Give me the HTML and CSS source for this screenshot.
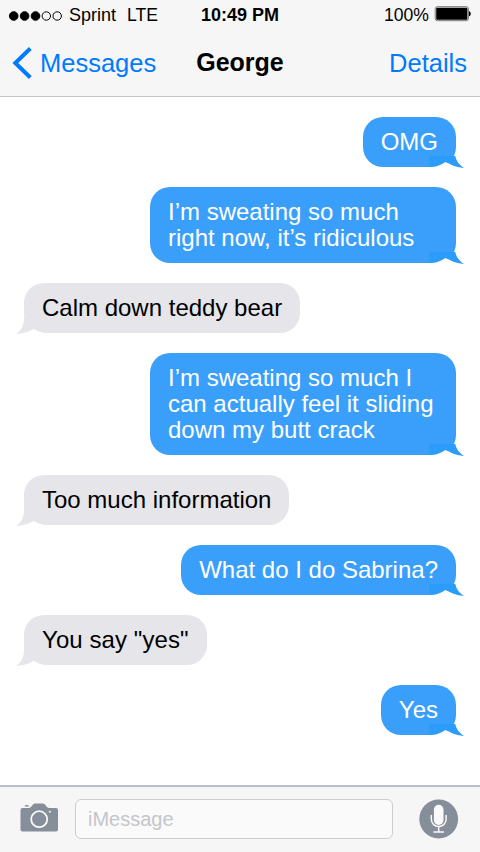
FILE: index.html
```html
<!DOCTYPE html>
<html lang="en">
<head>
<meta charset="utf-8">
<title>Messages</title>
<link rel="stylesheet" href="styles.css">
</head>
<body>
<svg class="defs" width="0" height="0" aria-hidden="true">
  <symbol id="tail-out" viewBox="0 0 36 13" preserveAspectRatio="none">
    <path fill="#2c9cfb" d="M0 0H27C28 5 31 10 36 13C29 12.4 22 9.5 17 6.4C13 9.5 7 11.5 0 11.900Z"/>
    <path fill="#fff" d="M3 12C9 11.300 13 9.300 17 6.4C21 9.300 25 11.300 29 12.300H3Z"/>
  </symbol>
  <symbol id="tail-in" viewBox="0 0 30 17">
    <path fill="#e5e5ea" d="M8 0C8 8 6 13 0 16.7C8 16.6 13 15 18 12L18 0Z"/>
    <path fill="#fff" d="M8 16C12 15 15 13.6 18 11.8C21 14 24 15.5 29 16.1H8Z"/>
  </symbol>
</svg>
<div class="phone">
  <header class="header">
    <div class="status">
      <div class="carrier">
        <svg width="55" height="12" viewBox="0 0 55 12"><g stroke="#000"><circle cx="5.7" cy="6" r="4.3"/><circle cx="16.6" cy="6" r="4.3"/><circle cx="27.5" cy="6" r="4.3"/><g fill="none"><circle cx="38.3" cy="6" r="4.2"/><circle cx="49.2" cy="6" r="4.2"/></g></g></svg>
        <span class="name">Sprint</span><span class="network">LTE</span>
      </div>
      <strong class="clock">10:49 PM</strong>
      <div class="power">
        <span>100%</span>
        <svg width="38" height="16" viewBox="0 0 38 16"><rect x="1.2" y=".7" width="33.2" height="14" rx="2.2" fill="#f6f6f6" stroke="#777"/><rect x="2.2" y="1.7" width="31.2" height="12" rx="1" fill="#000"/><path d="M35 5.2C37.4 5.6 37.4 9.8 35 10.2Z"/></svg>
      </div>
    </div>
    <nav class="nav">
      <a class="back"><svg width="20" height="32" viewBox="0 0 20 32"><path d="M18.300 1.5L3.300 16L18.300 30.5" fill="none" stroke="#007aff" stroke-width="4"/></svg><span>Messages</span></a>
      <h1 class="title">George</h1>
      <a class="details">Details</a>
    </nav>
  </header>
  <main class="thread">
    <div class="bubble out">OMG<svg class="tail"><use href="#tail-out"/></svg></div>
    <div class="bubble out wrapped">I’m sweating so much right now, it’s ridiculous<svg class="tail"><use href="#tail-out"/></svg></div>
    <div class="bubble in">Calm down teddy bear<svg class="tail"><use href="#tail-in"/></svg></div>
    <div class="bubble out wrapped">I’m sweating so much I can actually feel it sliding down my butt crack<svg class="tail"><use href="#tail-out"/></svg></div>
    <div class="bubble in">Too much information<svg class="tail"><use href="#tail-in"/></svg></div>
    <div class="bubble out">What do I do Sabrina?<svg class="tail"><use href="#tail-out"/></svg></div>
    <div class="bubble in quoted">You say "yes"<svg class="tail"><use href="#tail-in"/></svg></div>
    <div class="bubble out">Yes<svg class="tail"><use href="#tail-out"/></svg></div>
  </main>
  <footer class="composer">
    <svg class="camera" width="38" height="30" viewBox="0 0 38 30"><path fill="#868e99" d="M2.500 5H9C11 5 12 2.5 13.5 1Q14 .5 15 .5H23Q24 .5 24.5 1C26 2.5 27 5 29 5H36Q38 5 38 7V26.500Q38 28.500 36 28.500H2.500Q.5 28.500 .5 26.500V7Q.5 5 2.500 5Z"/><path fill="#868e99" d="M4.500 3.600Q4.500 2 6 2H7.500Q9 2 9 3.600Z"/><circle cx="19.200" cy="16.200" r="8" fill="none" stroke="#fafafa" stroke-width="1.800"/><circle cx="29.800" cy="8.700" r="1" fill="#fafafa"/></svg>
    <div class="field">iMessage</div>
    <svg class="mic" width="40" height="40" viewBox="0 0 40 40"><circle cx="19.700" cy="20" r="19.400" fill="#868e99"/><rect x="14.900" y="5.800" width="9.600" height="20.200" rx="4.800" fill="#fafafa"/><path fill="none" stroke="#fafafa" stroke-width="1.500" d="M12.300 16V20C12.300 30 27.100 30 27.100 20V16M19.700 27.500V32.500M14.400 33H25"/></svg>
  </footer>
</div>
</body>
</html>
```
FILE: styles.css
```css
* { box-sizing: border-box; }
body { margin: 0; background: #fff; font-family: "Liberation Sans", Arial, sans-serif; color: #000; }
svg { display: block; flex: none; }
.defs { position: absolute; }
.phone { width: 480px; height: 852px; display: flex; flex-direction: column; overflow: hidden; }
.header { height: 97px; background: #f6f6f6; border-bottom: 1px solid #c4c4c6; }
.status, .nav { display: grid; grid-template-columns: 1fr auto 1fr; align-items: center; }
.status { height: 30px; padding: 0 8px; font-size: 18px; line-height: 30px; }
.carrier, .power { display: flex; align-items: center; }
.carrier svg { margin-top: 1px; }
.name { margin-left: 6px; }
.network { margin-left: 11px; font-size: 17.600px; }
.power { justify-content: flex-end; gap: 6px; font-size: 17.600px; }
.power span { position: relative; left: 1px; }
.power svg { margin-top: -2px; }
.nav { height: 66px; padding: 0 13px 0 12px; font-size: 25.500px; color: #007aff; }
.back { display: flex; align-items: center; gap: 8px; }
.title { margin: 0; padding: 0 0 3px 1px; font-size: 25px; line-height: 30px; color: #000; }
.details { text-align: right; }
.thread { flex: 1; display: flex; flex-direction: column; gap: 20px; padding: 20px 24px 0; }
.bubble { position: relative; padding: 12px 18px; border-radius: 20px; font-size: 24px; line-height: 26px; white-space: nowrap; }
.wrapped { width: 306px; white-space: normal; }
.quoted { letter-spacing: .08px; }
.in { align-self: flex-start; background: #e5e5ea; }
.out { align-self: flex-end; background: #3a9ffb; color: #fff; }
.tail { position: absolute; }
.out .tail { width: 35px; height: 12px; right: -8px; bottom: -1px; }
.in .tail { width: 30px; height: 17px; left: -8px; bottom: -1px; }
.composer { height: 67px; display: flex; align-items: center; padding: 0 21px 2px 20px; background: #f6f6f6; border-top: 2px solid #b9bfca; }
.camera { margin-top: -2px; }
.field { width: 318px; height: 40px; margin: 0 26px 0 17px; padding: 0 12px; border: 1px solid #cdcdd0; border-radius: 6px; background: #fafafa; font-size: 20px; line-height: 39px; color: #c5c5ca; }
```
